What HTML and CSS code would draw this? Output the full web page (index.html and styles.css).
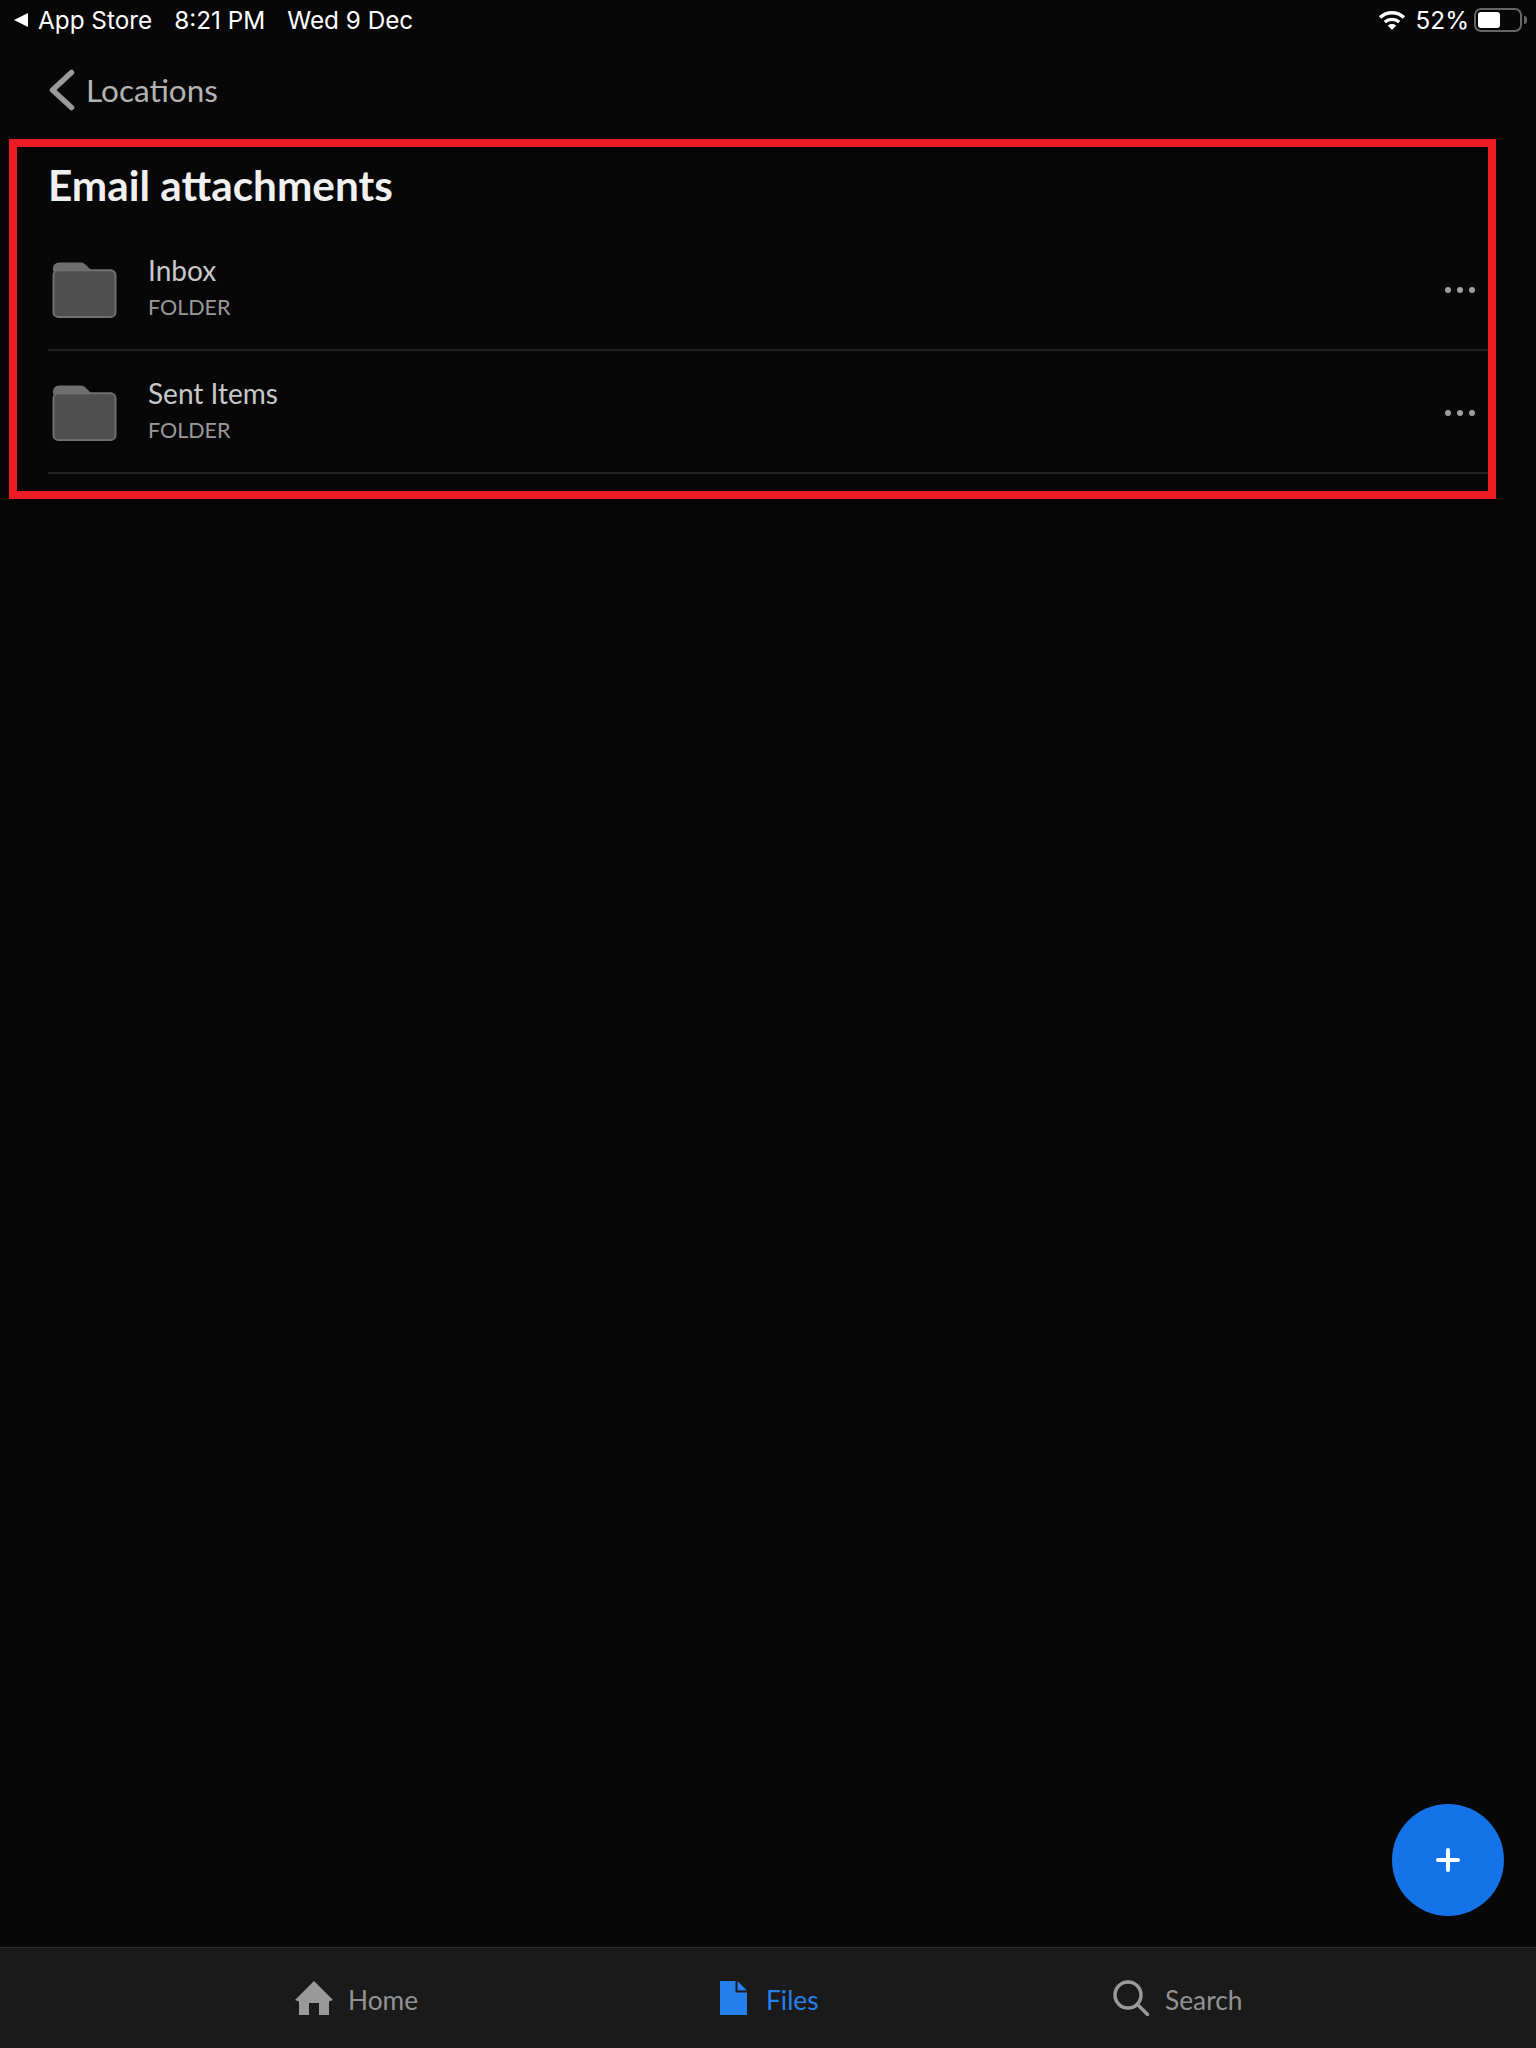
FILE: index.html
```html
<!DOCTYPE html>
<html lang="en">
<head>
  <meta charset="UTF-8">
  <title>Email attachments</title>
  <link rel="stylesheet" href="styles.css">
</head>
<body>
<div class="page">
  <div class="status-bar">
    <div class="status-left">
      <svg class="back-arrow" width="16" height="16" viewBox="0 0 16 16"><path d="M15 1V15L1 8Z" fill="#fff"/></svg>
      <span class="app-name">App Store</span>
      <span class="clock">8:21 PM</span>
      <span>Wed 9 Dec</span>
    </div>
    <div class="status-right">
      <svg class="wifi" width="28" height="22" viewBox="0 0 28 22" fill="none" stroke="#fff" stroke-width="3.400">
        <path d="M2 8.500C9 2.200 19 2.200 26 8.500"/>
        <path d="M6.800 13C11 9.500 17 9.500 21.200 13"/>
        <path d="M14 21L9.800 16.400C12.300 14.600 15.700 14.600 18.200 16.400Z" fill="#fff" stroke="none"/>
      </svg>
      <span class="percent">52%</span>
      <div class="battery"><div class="battery-level"></div></div>
      <div class="battery-tip"></div>
    </div>
  </div>

  <div class="nav-row">
    <svg width="26" height="42" viewBox="0 0 26 42" fill="none" stroke="#9a9a9a" stroke-width="5.500" stroke-linecap="round" stroke-linejoin="round"><path d="M22.500 3.500L3.500 21L22.500 38.500"/></svg>
    <span class="nav-label">Locations</span>
  </div>

  <section class="highlight-box">
    <h1 class="section-title">Email attachments</h1>
    <div class="file-row">
      <svg class="folder" width="65" height="58" viewBox="0 0 66 58">
        <path d="M1 7a6 6 0 0 1 6-6h22c3 0 4 1 6 3l6 6H1Z" fill="#6e6e6e"/>
        <rect x="1.500" y="9" width="63" height="47.500" rx="5" fill="#4f4f4f" stroke="#707070" stroke-width="2"/>
      </svg>
      <div class="file-text">
        <div class="file-name">Inbox</div>
        <div class="file-kind">FOLDER</div>
      </div>
      <div class="more"><span></span><span></span><span></span></div>
    </div>
    <div class="file-row">
      <svg class="folder" width="65" height="58" viewBox="0 0 66 58">
        <path d="M1 7a6 6 0 0 1 6-6h22c3 0 4 1 6 3l6 6H1Z" fill="#6e6e6e"/>
        <rect x="1.500" y="9" width="63" height="47.500" rx="5" fill="#4f4f4f" stroke="#707070" stroke-width="2"/>
      </svg>
      <div class="file-text">
        <div class="file-name">Sent Items</div>
        <div class="file-kind">FOLDER</div>
      </div>
      <div class="more"><span></span><span></span><span></span></div>
    </div>
  </section>

  <div class="spacer"></div>

  <div class="fab">
    <svg width="24" height="24" viewBox="0 0 24 24" stroke="#fff" stroke-width="4" stroke-linecap="round"><path d="M12 2V22M2 12H22"/></svg>
  </div>

  <nav class="tab-bar">
    <div class="tab">
      <svg width="38" height="34" viewBox="0 0 38 34"><path d="M19 0L38 19L34 20.500V34H24V22H14V34H4V20.500L0 19Z" fill="#999"/></svg>
      <span class="tab-label">Home</span>
    </div>
    <div class="tab tab-active">
      <svg width="27" height="34" viewBox="0 0 27 34"><path d="M0 0H15.500V11.500H27V34H0Z" fill="#2680eb"/><path d="M17.500 0L27 9.500H17.500Z" fill="#2680eb"/></svg>
      <span class="tab-label">Files</span>
    </div>
    <div class="tab tab-search">
      <svg width="36" height="36" viewBox="0 0 36 36" fill="none" stroke="#999" stroke-width="3.500" stroke-linecap="round"><circle cx="15" cy="15" r="13"/><path d="M24.500 24.500L34.500 34.500"/></svg>
      <span class="tab-label">Search</span>
    </div>
  </nav>
</div>
</body>
</html>
```
FILE: styles.css
```css
html, body {
  margin: 0;
  background: #070708;
}
.page {
  position: relative;
  width: 1536px;
  height: 2048px;
  display: flex;
  flex-direction: column;
  font-family: Lato, "Open Sans", sans-serif;
  overflow: hidden;
}
.status-bar {
  height: 40px;
  display: flex;
  justify-content: space-between;
  align-items: center;
  font-family: Inter, "Liberation Sans", sans-serif;
  font-size: 24.300px;
  color: #fff;
}
.status-left {
  display: flex;
  align-items: center;
  padding-left: 13px;
}
.back-arrow {
  margin-right: 9px;
}
.app-name {
  margin-right: 22px;
}
.clock {
  margin-right: 22px;
}
.status-right {
  display: flex;
  align-items: center;
  padding-right: 9px;
}
.wifi {
  margin-right: 10px;
}
.percent {
  margin-right: 5px;
}
.battery {
  box-sizing: border-box;
  width: 48px;
  height: 24px;
  border: 2px solid #666;
  border-radius: 7px;
  padding: 2px;
}
.battery-level {
  width: 22px;
  height: 16px;
  background: #fff;
  border-radius: 3px;
}
.battery-tip {
  width: 3px;
  height: 8px;
  margin-left: 2px;
  background: #666;
  border-radius: 0 3px 3px 0;
}
.nav-row {
  height: 99px;
  box-sizing: border-box;
  padding: 0 0 0 49px;
  display: flex;
  align-items: center;
  gap: 11px;
}
.nav-label {
  font-size: 31.500px;
  color: #b3b3b3;
}
.highlight-box {
  box-sizing: border-box;
  width: 1487px;
  height: 360px;
  margin-left: 9px;
  border: 8px solid #ed1c24;
  padding: 0 0 0 31px;
}
.section-title {
  margin: 0;
  height: 81px;
  line-height: 76px;
  font-size: 42.300px;
  font-weight: 700;
  color: #f0f0f0;
}
.file-row {
  height: 123px;
  box-sizing: border-box;
  border-bottom: 2px solid #222;
  display: flex;
  align-items: center;
}
.folder {
  margin: 2px 31px 0 4px;
}
.file-text {
  flex: 1;
}
.file-name {
  font-size: 28px;
  line-height: 37px;
  color: #c8c8c8;
}
.file-kind {
  font-size: 21.500px;
  line-height: 37px;
  color: #999;
}
.more {
  display: flex;
  gap: 6px;
  padding: 2px 13px 0 0;
}
.more span {
  width: 6px;
  height: 6px;
  border-radius: 50%;
  background: #a0a0a0;
}
.spacer {
  flex: 1;
}
.fab {
  position: absolute;
  left: 1392px;
  top: 1804px;
  width: 112px;
  height: 112px;
  border-radius: 50%;
  background: #1473e6;
  display: flex;
  align-items: center;
  justify-content: center;
}
.tab-bar {
  height: 101px;
  box-sizing: border-box;
  border-top: 1px solid #2e2e2e;
  background: #1a1a1a;
  padding-left: 295px;
  display: grid;
  grid-template-columns: 425px 393px auto;
  align-items: center;
}
.tab {
  display: flex;
  align-items: center;
  gap: 15px;
  font-size: 26.300px;
  color: #929292;
}
.tab-label {
  padding-top: 3px;
}
.tab-active {
  gap: 19px;
  color: #2680eb;
}
.tab-search {
  gap: 16px;
}
```
